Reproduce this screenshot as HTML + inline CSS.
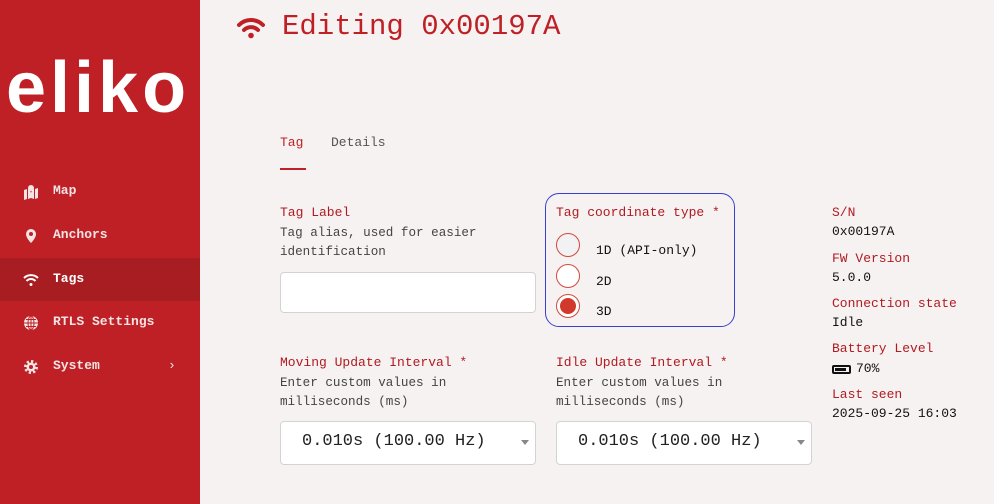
<!DOCTYPE html>
<html><head><meta charset="utf-8"><style>
*{margin:0;padding:0;box-sizing:border-box}
body{width:994px;height:504px;overflow:hidden;background:#f6f2f1;font-family:"Liberation Mono","DejaVu Sans Mono",monospace;position:relative}
.sb{position:absolute;left:0;top:0;width:200px;height:504px;background:#be2026}
.logo{position:absolute;left:6px;top:52px;color:#fff;font-family:"Liberation Sans",sans-serif;font-weight:bold;font-size:72px;line-height:72px;letter-spacing:4px}
.nav{position:absolute;left:0;width:200px;height:43px;color:#f4e4e4;font-size:13px;font-weight:bold}
.nav span{position:absolute;left:53px;top:13px}
.nav svg{position:absolute;left:23px;top:14px}
.act{background:#a81d22;color:#fff}
.a{position:absolute}
.lab{color:#b11a22;font-size:13px}
.desc{color:#444;font-size:12.6px;line-height:19px}
.val{color:#111;font-size:13px}
.inp{position:absolute;background:#fff;border:1px solid #d5d2d2;border-radius:4px}
.sel{font-size:17px;color:#222;padding:10px 0 0 21px}
.car{position:absolute;right:6px;top:18px;width:0;height:0;border-left:4px solid transparent;border-right:4px solid transparent;border-top:5px solid #888}
.rad{position:absolute;left:556px;width:24px;height:24px;border-radius:50%;border:1px solid #d0483d;background:#fff}
</style></head><body>
<div class="sb">
<div class="logo">eliko</div>
<div class="nav" style="top:170px"><svg width="16" height="16" viewBox="0 0 16 16"><path d="M1 6l3-1v10l-3 1zM5 5l2 1 1 3 1-3 2-1v10l-3-1-3 1zM12 5l3-1v10l-3 1z" fill="#f4e4e4"/><circle cx="8" cy="4" r="3" fill="#f4e4e4"/></svg><span>Map</span></div>
<div class="nav" style="top:214px"><svg width="16" height="16" viewBox="0 0 16 16"><path d="M8 1a5 5 0 0 1 5 5c0 4-5 9-5 9S3 10 3 6a5 5 0 0 1 5-5z" fill="#f4e4e4"/><circle cx="8" cy="6" r="2" fill="#be2026"/></svg><span>Anchors</span></div>
<div class="nav act" style="top:258px"><svg width="16" height="16" viewBox="0 0 16 16" fill="none" stroke="#fff" stroke-width="2"><path d="M1 6a10 10 0 0 1 14 0M3.5 9a6 6 0 0 1 9 0"/><circle cx="8" cy="12.5" r="1.5" fill="#fff" stroke="none"/></svg><span>Tags</span></div>
<div class="nav" style="top:301px"><svg width="16" height="16" viewBox="0 0 16 16"><circle cx="8" cy="8" r="7" fill="#f4e4e4"/><path d="M1 8h14M8 1v14M3 4.5h10M3 11.5h10" stroke="#be2026" stroke-width="1"/><ellipse cx="8" cy="8" rx="3" ry="7" fill="none" stroke="#be2026"/></svg><span>RTLS Settings</span></div>
<div class="nav" style="top:345px"><svg width="16" height="16" viewBox="0 0 16 16"><circle cx="8" cy="8" r="5.5" fill="none" stroke="#f4e4e4" stroke-width="3" stroke-dasharray="2.2 2.1"/><circle cx="8" cy="8" r="4.5" fill="#f4e4e4"/><circle cx="8" cy="8" r="2" fill="#be2026"/></svg><span>System</span><span style="left:168px;font-weight:normal">›</span></div>
</div>

<svg class="a" style="left:236px;top:17px" width="30" height="22" viewBox="0 0 30 22" fill="none" stroke="#be2026" stroke-width="4" stroke-linecap="round"><path d="M3 8a17 17 0 0 1 24 0M8 13a10 10 0 0 1 14 0"/><circle cx="15" cy="18.5" r="2.8" fill="#be2026" stroke="none"/></svg>
<div class="a" style="left:282px;top:10px;font-size:29px;color:#be2026">Editing 0x00197A</div>

<div class="a" style="left:280px;top:135px;font-size:13px;color:#be2026">Tag</div>
<div class="a" style="left:331px;top:135px;font-size:13px;color:#555">Details</div>
<div class="a" style="left:280px;top:168px;width:26px;height:2px;background:#be2026"></div>

<div class="a lab" style="left:280px;top:205px">Tag Label</div>
<div class="a desc" style="left:280px;top:224px">Tag alias, used for easier<br>identification</div>
<div class="inp" style="left:280px;top:272px;width:256px;height:41px"></div>

<div class="a" style="left:545px;top:193px;width:190px;height:134px;border:1px solid #3b3fd0;border-radius:14px"></div>
<div class="a lab" style="left:556px;top:205px">Tag coordinate type *</div>
<div class="rad" style="top:233px;background:#f2f2f4"></div>
<div class="rad" style="top:264px"></div>
<div class="rad" style="top:294px"><div style="position:absolute;left:3px;top:3px;width:16px;height:16px;border-radius:50%;background:#d0392b"></div></div>
<div class="a val" style="left:596px;top:243px">1D (API-only)</div>
<div class="a val" style="left:596px;top:274px">2D</div>
<div class="a val" style="left:596px;top:304px">3D</div>

<div class="a lab" style="left:280px;top:355px">Moving Update Interval *</div>
<div class="a desc" style="left:280px;top:374px">Enter custom values in<br>milliseconds (ms)</div>
<div class="inp sel" style="left:280px;top:421px;width:256px;height:44px">0.010s (100.00 Hz)<div class="car"></div></div>

<div class="a lab" style="left:556px;top:355px">Idle Update Interval *</div>
<div class="a desc" style="left:556px;top:374px">Enter custom values in<br>milliseconds (ms)</div>
<div class="inp sel" style="left:556px;top:421px;width:256px;height:44px">0.010s (100.00 Hz)<div class="car"></div></div>

<div class="a lab" style="left:832px;top:205px">S/N</div>
<div class="a val" style="left:832px;top:224px">0x00197A</div>
<div class="a lab" style="left:832px;top:251px">FW Version</div>
<div class="a val" style="left:832px;top:270px">5.0.0</div>
<div class="a lab" style="left:832px;top:296px">Connection state</div>
<div class="a val" style="left:832px;top:315px">Idle</div>
<div class="a lab" style="left:832px;top:341px">Battery Level</div>
<div class="a" style="left:832px;top:365px;width:19px;height:9px;border:2px solid #111;border-radius:2px"><div style="margin:1px;width:11px;height:3px;background:#111"></div></div>
<div class="a val" style="left:856px;top:361px">70%</div>
<div class="a lab" style="left:832px;top:387px">Last seen</div>
<div class="a val" style="left:832px;top:406px">2025-09-25 16:03</div>
</body></html>
